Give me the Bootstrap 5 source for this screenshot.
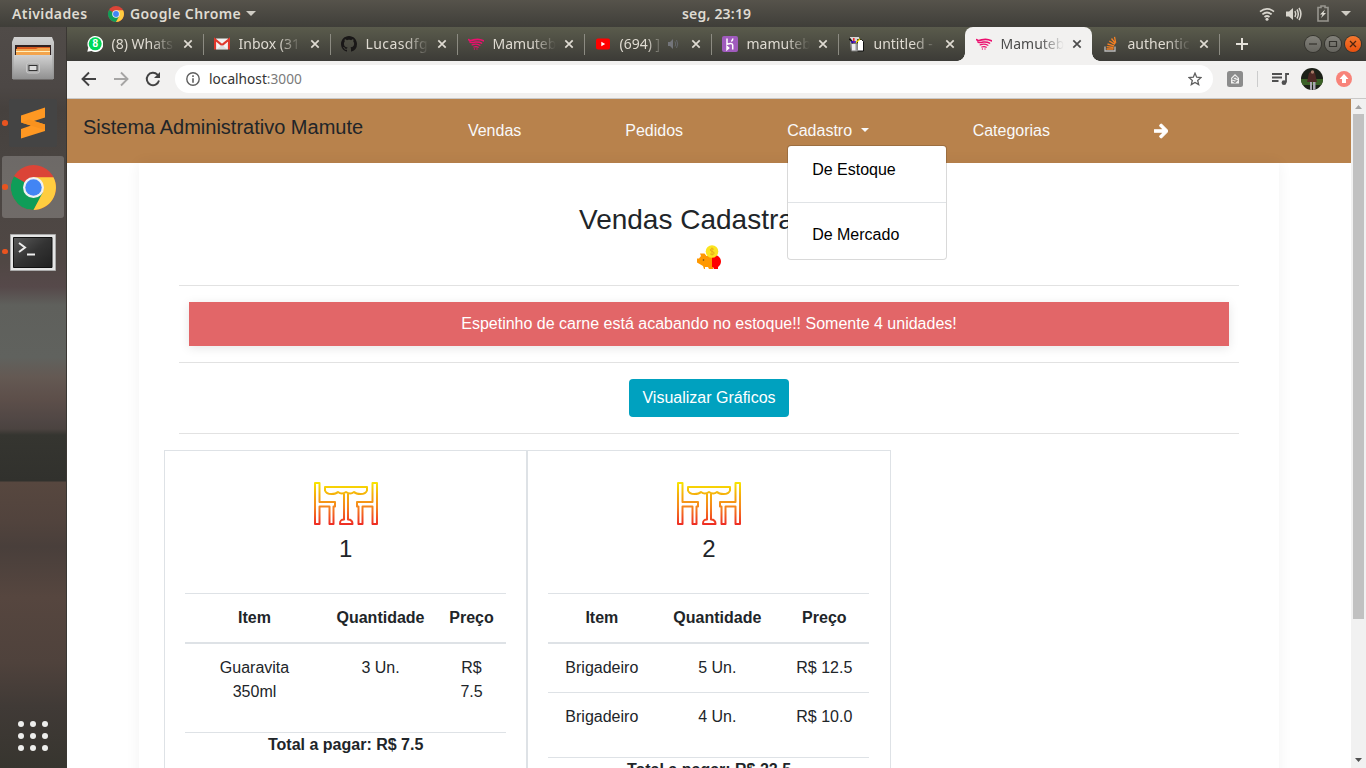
<!DOCTYPE html>
<html lang="pt-BR">
<head>
<meta charset="utf-8">
<meta name="viewport" content="width=device-width, initial-scale=1">
<title>Sistema Administrativo Mamute</title>
<link href="https://cdn.jsdelivr.net/npm/bootstrap@5.3.0/dist/css/bootstrap.min.css" rel="stylesheet">
<style>
  body { font-family: "Liberation Sans", Arial, sans-serif; font-size: 16px; line-height: 24px; color: #212529; background: #fff; }
  svg { display: block; flex: none; }
  .desktop { height: 768px; width: 1366px; }
  .ui-font { font-family: "Noto Sans", "Open Sans", sans-serif; }

  /* system bar */
  .sysbar { height: 27px; background: linear-gradient(#56534b, #3f3e39); color: #dfdbd2; font-size: 14px; font-weight: 600; letter-spacing: .4px; line-height: 27px; }
  .sysbar .start { width: 682px; flex: none; }
  .sysbar .end { flex: 1 1 0; }
  .sysbar .clock { flex: none; letter-spacing: .2px; }
  .down { border: 5px solid transparent; border-top-color: #cfccc4; border-bottom: 0; }

  /* dock */
  .dock { width: 67px; flex: none; padding-top: 6px; background:
     linear-gradient(90deg, transparent 66px, #3a3733 66px),
     linear-gradient(#504b48 0, #4c4745 60px, #46413e 82px, #4b4643 160px, #504744 235px, #56494a 260px, #5f605c 278px, #60625e 330px, #645953 350px, #5d4f4a 372px, #4f4644 395px, #4b4340 402px, #353530 408px, #31312d 454px, #57473f 455px, #51433d 495px, #493f3b 520px, #56463f 570px, #4f423c 635px, #403a36 680px, #37352f 741px); }
  .dock-item { height: 62px; width: 62px; margin: 0 0 2.4px 2px; border-radius: 3px; position: relative; }
  .dock-item:first-child { margin-bottom: -3px; }
  .dock-item.focused { background: rgba(255,255,255,.2); }
  .dock-item.running::before { content: ""; position: absolute; left: 0; top: 28px; width: 5.6px; height: 5.6px; border-radius: 50%; background: #e95420; }
  .apps-grid { display: grid; grid-template-columns: repeat(3, 6px); gap: 6px; margin: auto 0 17px 18px; }
  .apps-grid i { width: 6px; height: 6px; border-radius: 50%; background: #eeeeec; }

  /* tabs */
  .tabstrip { height: 34px; padding-left: 9px; background: linear-gradient(#5a5b4c, #3c3b37); color: #dfdbd2; font-size: 14px; }
  .tab-page { width: 127px; flex: none; padding: 0 10px 0 11px; position: relative; line-height: 34px; }
  .tab-page::after { content: ""; position: absolute; right: -1px; top: 7px; width: 1px; height: 21px; background: #8c8b82; }
  .tab-page.current::after, .tab-page.before-current::after { display: none; }
  .tab-page.current { background: #f2f1f0; color: #4c4c4c; border-radius: 8px 8px 0 0; }
  .tab-page.current .flare-l, .tab-page.current .flare-r { position: absolute; bottom: 0; width: 8px; height: 8px; }
  .flare-l { left: -8px; background: radial-gradient(circle at 0 0, transparent 7.5px, #f2f1f0 8px); }
  .flare-r { right: -8px; background: radial-gradient(circle at 100% 0, transparent 7.5px, #f2f1f0 8px); }
  .tab-name { width: 63px; margin-left: 8.5px; overflow: hidden; white-space: nowrap; -webkit-mask: linear-gradient(90deg, #000 62%, transparent 100%); mask: linear-gradient(90deg, #000 62%, transparent 100%); }
  .tab-name.narrow { width: 43px; }
  .tab-close { margin-left: auto; }
  .win-btn { width: 16px; height: 16px; border-radius: 50%; background: linear-gradient(#82817a, #66655f); box-shadow: 0 0 0 1px #35342f; margin-left: 4px; }
  .win-btn.exit { background: linear-gradient(#f5792f, #e9500e); }

  /* toolbar */
  .toolbar-row { height: 38px; background: #f2f1f0; border-bottom: 1px solid #c9c8c7; padding: 4px 0 5px 14px; }
  .omnibox { width: 1038px; height: 28px; background: #fff; border-radius: 14px; margin-left: 14px; padding: 0 11px; font-size: 13.7px; color: #333; }
  .omnibox small { font-size: inherit; color: #7a7a7a; }

  /* page */
  .page { width: 1284px; }
  .app-nav { height: 64px; background: #b8824c; padding: 0 16px; gap: 104px; }
  .app-nav .navbar-brand { font-size: 20px; color: #212529; margin: 0 .8px 9px 0; padding: 0; line-height: 30px; }
  .app-nav .nav-link { color: #f8f9fa; padding: 0; line-height: 24px; }
  .app-nav .dropdown-toggle::after { margin-left: 8.6px; border-top-width: 4.8px; border-left-width: 4.8px; border-right-width: 4.8px; vertical-align: 4px; }
  .app-menu { top: 46px; left: 0; width: 160px; padding: 8px 0; height: 115px; border: 1px solid rgba(0,0,0,.15); border-radius: 4px; margin: 0; }
  .app-menu .dropdown-item { padding: 4px 24px; color: #000; line-height: 24px; }
  .app-menu .dropdown-divider { margin: 16px 0; border-top: 1px solid #e0e3e6; opacity: 1; }
  .sheet { width: 1140px; padding: 37px 25px 0; box-shadow: 0 0 14px rgba(0,0,0,.055); height: 700px; }
  .sheet h1 { font-size: 28px; line-height: 33.6px; margin: 0 0 8px; font-weight: 400; }
  .rule { height: 1px; background: #e2e2e2; }
  .stock-alert { background: #e26668; color: #fff; height: 44px; line-height: 44px; margin: 16px 10px; box-shadow: 0 2px 10px rgba(0,0,0,.1); }
  .btn-graph { background: #00a1bf; color: #fff; border-radius: 4px; height: 38px; width: 160px; padding: 6px 0; line-height: 24px; }
  .order-card { width: 363.33px; padding: 20px; border: 1px solid #dee2e6; border-radius: 0; height: 400px; }
  .order-no { font-size: 24px; line-height: 28.8px; margin: 0 0 30px; font-weight: 400; }
  .order-card .table { width: 321px; table-layout: fixed; color: #212529; border-collapse: separate; border-spacing: 0; margin-bottom: 16px; }
  .order-card .table > * > tr > * { padding: 12px; border: 0 solid #dee2e6; border-top-width: 1px; background: none; box-shadow: none; color: inherit; }
  .order-card .table > thead > tr > th { border-bottom-width: 2px; padding-left: 0; padding-right: 0; line-height: 24px; }
  .order-card .table > tbody { border: 0; }
  .order-card .table > tbody > tr:first-child > td { border-top: 0; }
  .sum-rule { width: 321px; height: 1px; background: #dee2e6; }

  .scroller { width: 15px; background: #f1f1f1; flex: none; }
  .scroller .thumb { width: 11px; height: 505px; background: #c1c1c1; margin: 4px 0 0 2px; }
</style>
</head>
<body class="overflow-hidden">
<svg width="0" height="0" class="position-absolute">
  <defs>
    <linearGradient id="fire" gradientUnits="userSpaceOnUse" x1="0" y1="11" x2="0" y2="54"><stop offset="0" stop-color="#f8e800"/><stop offset=".3" stop-color="#f5ae0c"/><stop offset=".6" stop-color="#f58220"/><stop offset="1" stop-color="#ee2a24"/></linearGradient>
    <linearGradient id="steel" x1="0" y1="0" x2="0" y2="1"><stop offset="0" stop-color="#d2d2d2"/><stop offset="1" stop-color="#8f8f8f"/></linearGradient>
    <linearGradient id="screen" x1="0" y1="0" x2="1" y2="1"><stop offset="0" stop-color="#5a5a5a"/><stop offset=".5" stop-color="#333"/><stop offset="1" stop-color="#202020"/></linearGradient>
    <symbol id="chrome" viewBox="0 0 48 48">
      <circle cx="24" cy="24" r="24" fill="#db4437"/>
      <path d="M24 24L3.200 12A24 24 0 0 0 24 48L34.400 30z" fill="#0f9d58"/>
      <path d="M24 13H45.300A24 24 0 0 1 24 48L34 29z" fill="#ffcd40"/>
      <circle cx="24" cy="24" r="11.200" fill="#f1f1f1"/><circle cx="24" cy="24" r="8.800" fill="#4285f4"/>
    </symbol>
    <symbol id="shut" viewBox="0 0 10 10"><path d="M1.300 1.300l7.400 7.400M8.700 1.300L1.300 8.700" stroke="currentColor" stroke-width="1.700"/></symbol>
    <symbol id="mamute" viewBox="0 0 16 16"><g fill="none" stroke="#ec0f6e" stroke-linecap="round"><path d="M.6 3.600C2 5.300 3.500 4.500 5.500 3.900 9 3 12.500 3.300 15.400 4.800" stroke-width="1.700"/><path d="M1.800 5.800C4 7.300 5.500 6.300 7.500 6 9.800 5.700 12 6.200 13.600 7.200" stroke-width="1.500"/><path d="M4.200 8.900C6.500 8 9.500 8 11.900 9.300" stroke-width="1.300"/><path d="M5.800 11C7.300 10.400 9 10.400 10.300 11.200M6.400 12.900v.2M9 12.900v.2" stroke-width="1.200"/></g></symbol>
    <symbol id="dining" viewBox="0 0 64 64"><g fill="none" stroke="url(#fire)" stroke-width="2" stroke-linejoin="round"><path d="M1 12h4.500v19H21v4.500h-1.500V53h-4V35.500h-10V53H1z"/><path d="M63 12h-4.500v19H43v4.500h1.500V53h4V35.500h10V53H63z"/><path d="M11 16h42v3.500c-1 3-3.500 3.500-6.500 3.500-2.500 0-5-.5-6.500-2-2.500 2-5 2-8 0-3 2-5.500 2-8 0-1.500 1.500-4 2-6.500 2-3 0-5.500-.5-6.500-3.500z"/><path d="M30 22.500v26c-3 0-4 1-4 4.500h12.500c0-3.500-1.500-4.500-4.500-4.500v-26"/></g></symbol>
  </defs>
</svg>

<div class="desktop d-flex flex-column overflow-hidden">
  <header class="sysbar ui-font d-flex align-items-center">
    <div class="start d-flex align-items-center">
      <span style="margin-left:12px;width:96px">Atividades</span>
      <svg width="16" height="16"><use href="#chrome"/></svg>
      <span class="text-nowrap" style="margin:0 5px 0 6px;width:111px">Google Chrome</span><i class="down"></i>
    </div>
    <span class="clock">seg, 23:19</span>
    <div class="end d-flex align-items-center justify-content-end">
      <svg width="16" height="16" viewBox="0 0 16 16" fill="none" stroke="#d8d5cd" stroke-width="1.700"><path d="M1 5.600Q8 .2 15 5.600M3.400 8.400q4.600-3.800 9.200 0M5.500 11q2.500-2 5 0"/><circle cx="8" cy="13.300" r="1.500" fill="#d8d5cd" stroke="none"/></svg>
      <svg style="margin-left:7px;margin-right:13px" width="22" height="16" viewBox="-4 0 22 16"><path d="M0 5.500h3L7 2v12L3 10.500H0z" fill="#d8d5cd"/><path d="M9 5q1.500 3 0 6M11 3.500q2.600 4.500 0 9M13 2q3.800 6 0 12" fill="none" stroke="#d8d5cd" stroke-width="1.500"/></svg>
      <svg width="12" height="17" viewBox="0 0 12 17"><path d="M4 2.500V1h4v1.500h3V16H1V2.500z" fill="none" stroke="#98968f" stroke-width="1.600"/><path d="M8 4.500L3 9.500h2.500L4 13l5-5H6.500z" fill="#e0ddd5"/></svg>
      <i class="down" style="margin:0 15px 0 12px"></i>
    </div>
  </header>

  <div class="d-flex flex-grow-1" style="min-height:0">
    <aside class="dock d-flex flex-column">
      <div class="dock-item"><svg width="62" height="62" viewBox="0 0 62 62"><path d="M12 4h38l2 5v37H10V9z" fill="url(#steel)"/><path d="M13 12h36v12H13z" fill="#302222"/><path d="M15 14h33v8H14z" fill="#d85a20"/><path d="M14 16h20l2-1h12v7H14z" fill="#f3a44c"/><path d="M14 18h34v1H14z" fill="#fff0bd"/><path d="M12 22h38l1 24.500H11z" fill="url(#steel)"/><rect x="24.500" y="30" width="13" height="10" rx="2" fill="#aaa" stroke="#c8c8c8"/><rect x="27" y="32.500" width="8" height="5" fill="#ddd" stroke="#333"/></svg></div>
      <div class="dock-item running"><svg width="62" height="62" viewBox="0 0 62 62"><rect x="7" y="7" width="48" height="48" rx="2" fill="#444"/><path d="M19 23.500L43 15.500v10l-11 3.500 11 3.500v6.500L19 46.500V37l10-3.500-10-3z" fill="#ff9822"/><path d="M19 30.500l24 7.500v-5.500L27 27.500z" fill="#f9921e"/></svg></div>
      <div class="dock-item running focused d-flex align-items-center justify-content-center"><svg width="45" height="45"><use href="#chrome"/></svg></div>
      <div class="dock-item running"><svg width="62" height="62" viewBox="0 0 62 62"><path d="M8.500 13.500h45v36h-45z" fill="#e5e5e5" stroke="#aaa"/><path d="M11.500 16.500h38.500v30H11.500z" fill="url(#screen)" stroke="#111"/><path d="M17 22l6 4.500-6 4.500M25 33.500h8" fill="none" stroke="#eee" stroke-width="2"/></svg></div>
      <div class="apps-grid"><i></i><i></i><i></i><i></i><i></i><i></i><i></i><i></i><i></i></div>
    </aside>

    <main class="d-flex flex-column flex-grow-1" style="min-width:0">
      <div class="tabstrip ui-font d-flex">
        <div class="tab-page d-flex align-items-center"><svg width="16" height="16" viewBox="0 0 16 16"><path d="M.3 15.700l1-4A8 8 0 1 1 4.500 15z" fill="#fff"/><circle cx="8.200" cy="7.800" r="6.500" fill="#00d757"/><text x="8.200" y="11.400" font-family="Liberation Sans" font-weight="700" font-size="10" text-anchor="middle" fill="#fff">8</text></svg><span class="tab-name">(8) Whats</span><svg class="tab-close" width="10" height="10"><use href="#shut"/></svg></div>
        <div class="tab-page d-flex align-items-center"><svg width="16" height="16" viewBox="0 0 16 16"><path d="M2 2.500h12v11H2z" fill="#f2f2f2"/><path d="M1 13.500V3.500L8 9l7-5.500v10" fill="none" stroke="#e0372b" stroke-width="2.200"/><path d="M3 13l5-4 5 4z" fill="#ddd"/></svg><span class="tab-name">Inbox (31</span><svg class="tab-close" width="10" height="10"><use href="#shut"/></svg></div>
        <div class="tab-page d-flex align-items-center"><svg width="16" height="16" viewBox="0 0 16 16"><path fill="#191717" d="M8 0C3.580 0 0 3.580 0 8c0 3.540 2.290 6.530 5.470 7.590.4.070.55-.17.55-.38 0-.19-.01-.82-.01-1.490-2.010.37-2.530-.49-2.690-.94-.09-.23-.48-.94-.82-1.130-.28-.15-.68-.52-.01-.53.63-.01 1.080.58 1.230.82.72 1.210 1.870.87 2.330.66.07-.52.28-.87.51-1.070-1.780-.2-3.640-.89-3.640-3.950 0-.87.31-1.590.82-2.150-.08-.2-.36-1.020.08-2.120 0 0 .67-.21 2.200.82.64-.18 1.320-.27 2-.27s1.360.09 2 .27c1.530-1.040 2.200-.82 2.200-.82.44 1.100.16 1.920.08 2.120.51.56.82 1.270.82 2.150 0 3.070-1.870 3.750-3.650 3.950.29.25.54.73.54 1.480 0 1.070-.01 1.930-.01 2.200 0 .21.15.46.55.38A8.010 8.010 0 0 0 16 8c0-4.420-3.580-8-8-8z"/></svg><span class="tab-name" style="letter-spacing:.4px">Lucasdfg</span><svg class="tab-close" width="10" height="10"><use href="#shut"/></svg></div>
        <div class="tab-page d-flex align-items-center"><svg width="16" height="16"><use href="#mamute"/></svg><span class="tab-name">Mamuteb</span><svg class="tab-close" width="10" height="10"><use href="#shut"/></svg></div>
        <div class="tab-page d-flex align-items-center"><svg width="16" height="16" viewBox="0 0 16 16"><rect x="1" y="2.500" width="14" height="11" rx="2" fill="#f00"/><path d="M6.300 5.800v4.400L10.200 8z" fill="#fff"/></svg><span class="tab-name narrow">(694) ]</span><svg class="ms-1" width="12" height="12" viewBox="0 0 12 12"><path d="M1 4h2l3-3v10L3 8H1z" fill="#73757a"/><path d="M8 3.500q1.500 2.500 0 5M9.500 2q2.500 4 0 8" fill="none" stroke="#64676b"/></svg><svg class="tab-close" width="10" height="10"><use href="#shut"/></svg></div>
        <div class="tab-page d-flex align-items-center"><svg width="16" height="16" viewBox="0 0 16 16"><rect width="16" height="16" rx="2" fill="#a05bbd"/><path d="M5 2.500v5.700c3-1 5.700-1.200 5.700.8v4.500M10.800 2.500q0 1.700-1.500 3M5 10.500v3l1.700-1.500z" stroke="#fff" stroke-width="1.500" fill="none"/></svg><span class="tab-name">mamuteb</span><svg class="tab-close" width="10" height="10"><use href="#shut"/></svg></div>
        <div class="tab-page before-current d-flex align-items-center"><svg width="16" height="16" viewBox="0 0 16 16"><path d="M1 1h9l1 5-1 9H2z" fill="#d5d5d5"/><path d="M8.500 3.500h4l2 2V15H8.500z" fill="#fff" stroke="#111"/><path d="M2 7.500h6.500V15H2.500z" fill="#eee" stroke="#777"/><path d="M6.500 8h2v7h-2z" fill="#999"/><path d="M.5 2.500L4 7" stroke="#111" stroke-width="1.800"/><path d="M4.800 2v5" stroke="#e22" stroke-width="1.500"/><path d="M11 3L6.500 7" stroke="#dc0" stroke-width="1.500"/><path d="M2 6h5" stroke="#31c" stroke-width="1.500"/></svg><span class="tab-name">untitled -</span><svg class="tab-close" width="10" height="10"><use href="#shut"/></svg></div>
        <div class="tab-page current d-flex align-items-center"><i class="flare-l"></i><svg width="16" height="16"><use href="#mamute"/></svg><span class="tab-name">Mamuteb</span><svg class="tab-close" width="10" height="10"><use href="#shut"/></svg><i class="flare-r"></i></div>
        <div class="tab-page d-flex align-items-center"><svg width="16" height="16" viewBox="0 0 16 16"><path d="M2 10.500V15h10v-4.500" fill="none" stroke="#bcbbbb" stroke-width="1.300"/><path d="M3.500 13h7M3.700 10.700l6.900.8M4.500 8l6.600 1.800M6.300 5l5.500 3.400M8.500 2.500l4 5M11.500.8l1.200 6" stroke="#f48024" stroke-width="1.300"/></svg><span class="tab-name">authentic</span><svg class="tab-close" width="10" height="10"><use href="#shut"/></svg></div>
        <svg class="align-self-center" style="margin-left:17px" width="12" height="12" viewBox="0 0 12 12"><path d="M6 0v12M0 6h12" stroke="#e5e2da" stroke-width="2"/></svg>
        <div class="d-flex align-items-center ms-auto" style="padding-right:5px">
          <div class="win-btn"><svg width="16" height="16"><path d="M4 8h8" stroke="#33322d" stroke-width="1.200"/></svg></div>
          <div class="win-btn"><svg width="16" height="16"><path d="M4.500 5.500h7v5h-7z" stroke="#33322d" fill="none" stroke-width="1.200"/></svg></div>
          <div class="win-btn exit"><svg width="16" height="16"><path d="M5 5l6 6M11 5l-6 6" stroke="#4c2410" stroke-width="1.300"/></svg></div>
        </div>
      </div>

      <div class="toolbar-row ui-font d-flex align-items-center">
        <svg width="16" height="16" viewBox="0 0 16 16" fill="none" stroke="#424242" stroke-width="1.900"><path d="M15 8H2M8 1.500L1.500 8 8 14.500"/></svg>
        <svg style="margin-left:16px" width="16" height="16" viewBox="0 0 16 16" fill="none" stroke="#a6a5a4" stroke-width="1.900"><path d="M1 8h13M8 1.500L14.500 8 8 14.500"/></svg>
        <svg style="margin-left:16px" width="16" height="16" viewBox="0 0 16 16" fill="none" stroke="#424242" stroke-width="1.900"><path d="M14 9.500A6.200 6.200 0 1 1 12.500 3.700L14 5.500"/><path d="M15 1v6H9z" fill="#424242" stroke="none"/></svg>
        <div class="omnibox d-flex align-items-center">
          <svg width="14" height="14" viewBox="0 0 14 14"><circle cx="7" cy="7" r="6.200" fill="none" stroke="#5f5f5f" stroke-width="1.400"/><path d="M7 3.300v1.600M7 6.200v4.500" stroke="#5f5f5f" stroke-width="1.600"/></svg>
          <span style="margin-left:9px">localhost<small>:3000</small></span>
          <svg class="ms-auto" width="14" height="14" viewBox="0 0 14 14"><path d="M7 1.200l1.700 4 4.300.4-3.300 2.800 1 4.200L7 10.400l-3.700 2.200 1-4.200L1 5.600l4.300-.4z" fill="none" stroke="#5f5f5f" stroke-width="1.300"/></svg>
        </div>
        <svg style="margin-left:14px" width="16" height="16" viewBox="0 0 16 16"><rect width="16" height="16" rx="2.500" fill="#8c8c8c"/><path d="M4 12.500V7L8 3l4 4v5.500z" fill="#f2f1f0"/><path d="M10.500 7.500L8 5.500 5.500 8l4.500 1.500-2 2L5.500 10" fill="none" stroke="#8c8c8c" stroke-width="1.100"/></svg>
        <div style="width:1px;height:16px;background:#ccc;margin:0 14px"></div>
        <svg width="17" height="14" viewBox="0 0 17 14"><path d="M0 2h10M0 5.500h10M0 9h6.500M17 2h-3v8.500" fill="none" stroke="#505050" stroke-width="1.800"/><circle cx="12" cy="10.700" r="2.400" fill="#505050"/></svg>
        <svg style="margin-left:12px" width="22" height="22" viewBox="0 0 22 22"><clipPath id="face"><circle cx="11" cy="11" r="11"/></clipPath><g clip-path="url(#face)"><path d="M0 0h22v22H0z" fill="#1d2118"/><path d="M0 11h22v6H0z" fill="#3b6126"/><path d="M8 5q3-3 6 0l2 9H6z" fill="#4e2824"/><circle cx="11.500" cy="4" r="1.700" fill="#a77b68"/><path d="M9 14h2v8H9M12 14h2.500v8H12z" fill="#a9a4b0"/></g></svg>
        <svg style="margin-left:13px" width="16" height="16" viewBox="0 0 16 16"><circle cx="8" cy="8" r="8" fill="#f88379"/><path d="M8 3l4.500 5H10v4H6V8H3.500z" fill="#fff"/></svg>
      </div>

      <div class="d-flex flex-grow-1" style="min-height:0">
        <div class="page overflow-hidden">
          <nav class="app-nav d-flex align-items-center">
            <a class="navbar-brand" href="#">Sistema Administrativo Mamute</a>
            <a class="nav-link" href="#">Vendas</a>
            <a class="nav-link" href="#">Pedidos</a>
            <div class="dropdown d-flex align-items-center align-self-stretch">
              <a class="nav-link dropdown-toggle" href="#">Cadastro</a>
              <div class="dropdown-menu show app-menu">
                <a class="dropdown-item" href="#" style="margin-bottom:16px">De Estoque</a>
                <hr class="dropdown-divider">
                <a class="dropdown-item" href="#">De Mercado</a>
              </div>
            </div>
            <a class="nav-link" href="#">Categorias</a>
            <a class="nav-link" href="#" aria-label="Sair"><svg width="14" height="16" viewBox="0 0 448 512" fill="#fff"><path d="M190.500 66.900l22.200-22.200c9.400-9.400 24.600-9.400 33.900 0L441 239c9.400 9.400 9.400 24.600 0 33.900L246.600 467.300c-9.400 9.400-24.600 9.400-33.900 0l-22.200-22.200c-9.500-9.500-9.300-25 .4-34.300L311.400 296H24c-13.300 0-24-10.700-24-24v-32c0-13.300 10.700-24 24-24h287.400L190.900 101.200c-9.800-9.300-10-24.800-.4-34.300z" stroke="#fff" stroke-width="36"/></svg></a>
          </nav>

          <section class="sheet mx-auto text-center">
            <div style="padding:0 15px">
              <h1 style="padding-top:3px">Vendas Cadastradas</h1>
              <svg class="mx-auto" style="margin-bottom:15px" width="24" height="25" viewBox="0 0 24 25"><path d="M3 8.500h4.500L9.500 11H16v13h-4l-1-2H8v2H7l-1-3-6-3.500v-4h2l2-2.500z" fill="#ff9800"/><path d="M15 10h4l2 1c4 3 4 8 0 11v2h-4l-1-2h-1z" fill="#f00"/><circle cx="15" cy="6.500" r="6.300" fill="#fbe420"/><path d="M16.800 4.200q-3.500-1.300-3.500.7c0 2 3.800 1 3.800 3.200 0 1.700-2 1.800-4 .8M15 2.500v8" fill="none" stroke="#e9ac19"/><circle cx="6.500" cy="15" r=".8" fill="#614221"/></svg>
              <div class="rule"></div>
              <div class="stock-alert">Espetinho de carne está acabando no estoque!! Somente 4 unidades!</div>
              <div class="rule"></div>
              <div class="my-3 d-flex justify-content-center"><a class="btn btn-graph" href="#">Visualizar Gráficos</a></div>
              <div class="rule"></div>
            </div>
            <div class="d-flex mt-3">
              <div class="card order-card d-block">
                <svg class="mx-auto" width="64" height="64"><use href="#dining"/></svg>
                <h4 class="order-no">1</h4>
                <table class="table">
                  <colgroup><col style="width:139px"><col style="width:113px"><col></colgroup>
                  <thead><tr><th>Item</th><th>Quantidade</th><th>Preço</th></tr></thead>
                  <tbody><tr><td>Guaravita 350ml</td><td>3 Un.</td><td>R$ 7.5</td></tr></tbody>
                </table>
                <div class="sum-rule"></div>
                <strong>Total a pagar: R$ 7.5</strong>
              </div>
              <div class="card order-card d-block">
                <svg class="mx-auto" width="64" height="64"><use href="#dining"/></svg>
                <h4 class="order-no">2</h4>
                <table class="table">
                  <colgroup><col style="width:107px"><col style="width:124px"><col></colgroup>
                  <thead><tr><th>Item</th><th>Quantidade</th><th>Preço</th></tr></thead>
                  <tbody><tr><td>Brigadeiro</td><td>5 Un.</td><td>R$ 12.5</td></tr><tr><td>Brigadeiro</td><td>4 Un.</td><td>R$ 10.0</td></tr></tbody>
                </table>
                <div class="sum-rule"></div>
                <strong>Total a pagar: R$ 22.5</strong>
              </div>
            </div>
          </section>
        </div>
        <div class="scroller d-flex flex-column">
          <svg width="15" height="11" viewBox="0 0 15 11"><path d="M4 10l3.500-4L11 10z" fill="#a3a3a3"/></svg>
          <div class="thumb"></div>
          <svg class="mt-auto" width="15" height="15" viewBox="0 0 15 15"><path d="M4 5l3.500 4L11 5z" fill="#505050"/></svg>
        </div>
      </div>
    </main>
  </div>
</div>
<script src="https://cdn.jsdelivr.net/npm/bootstrap@5.3.0/dist/js/bootstrap.bundle.min.js"></script>
</body>
</html>
